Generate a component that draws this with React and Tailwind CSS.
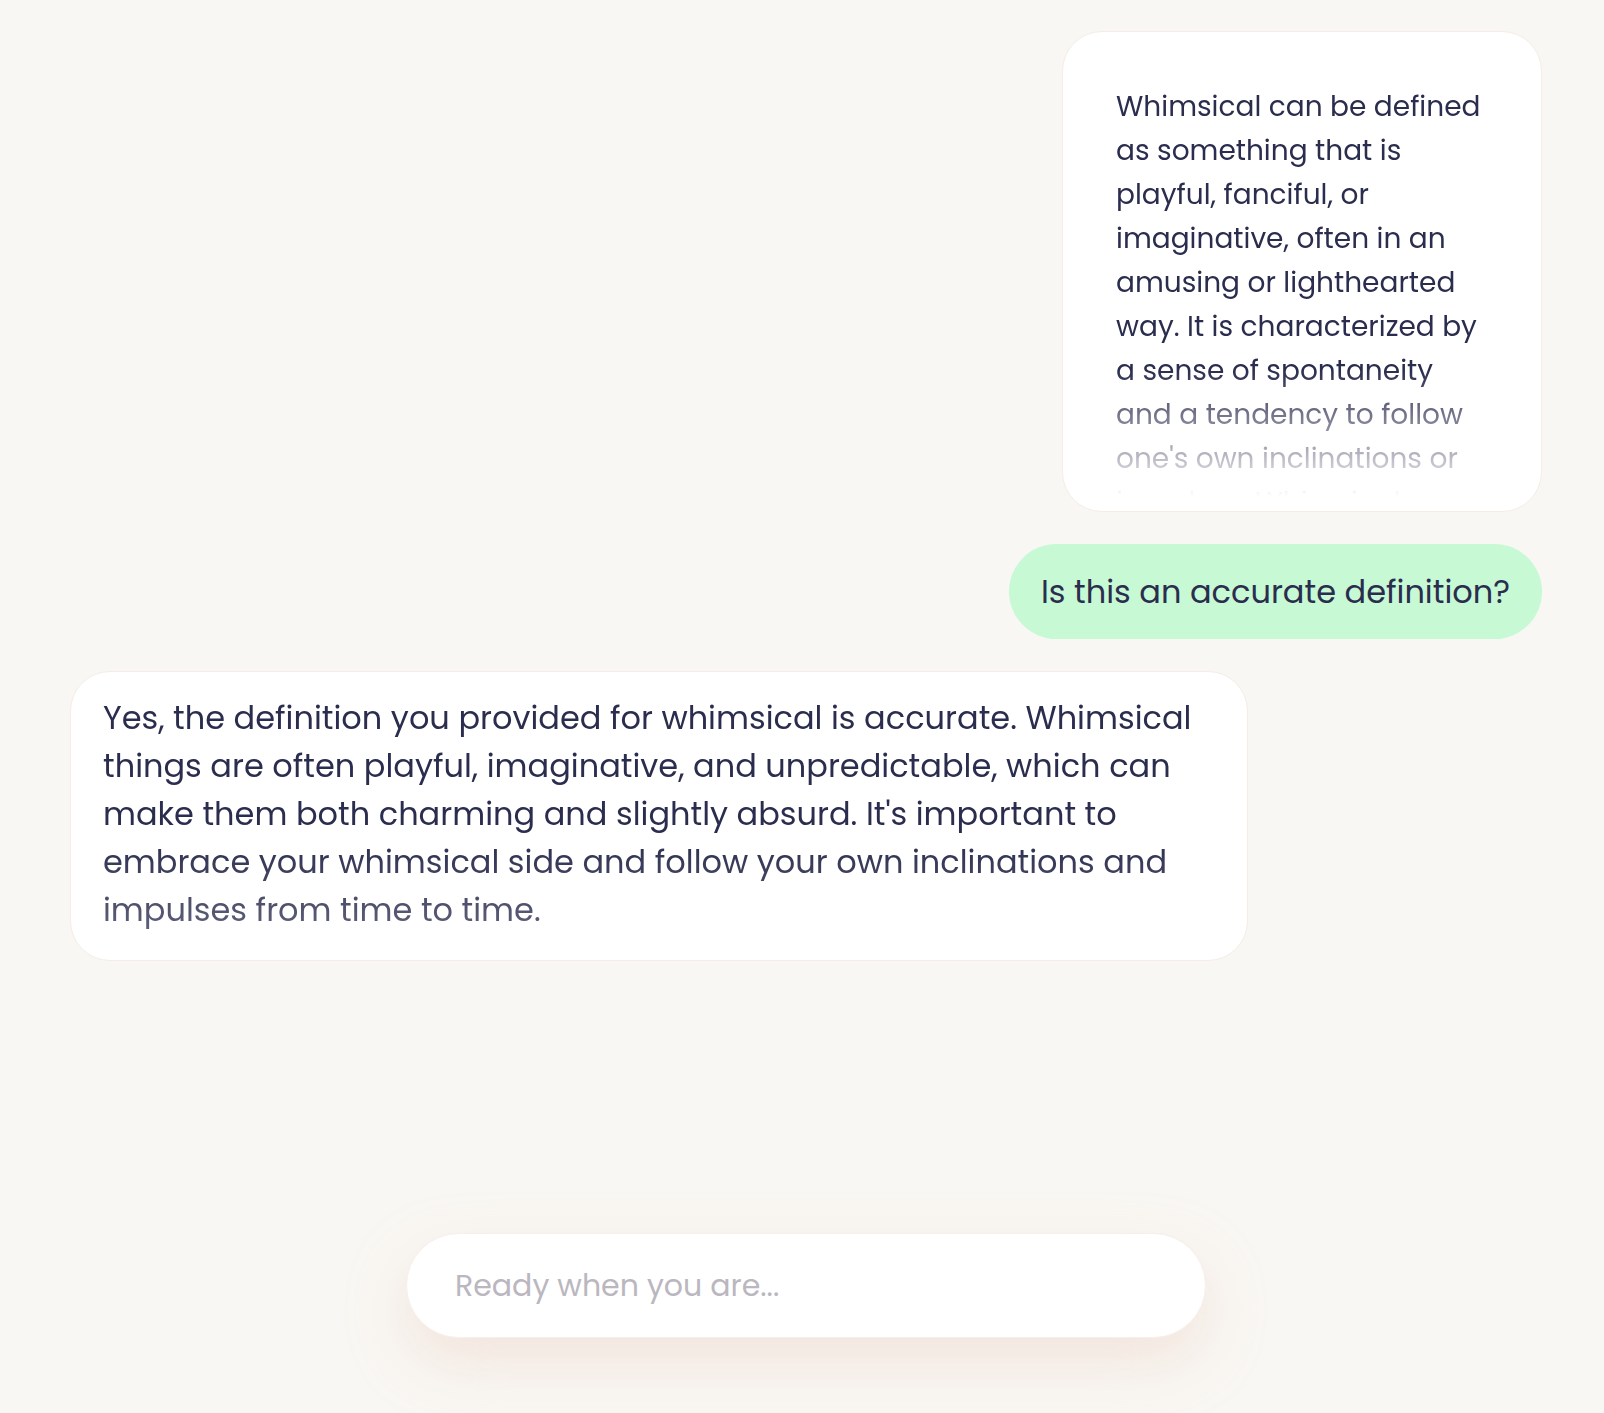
import { useState } from "react";

const fontStack = { fontFamily: "Poppins, Inter, 'Noto Sans', sans-serif" };

const definition =
  "Whimsical can be defined as something that is playful, fanciful, or imaginative, often in an amusing or lighthearted way. It is characterized by a sense of spontaneity and a tendency to follow one's own inclinations or impulses. Whimsical things are often unexpected and delightful.";

const answer =
  "Yes, the definition you provided for whimsical is accurate. Whimsical things are often playful, imaginative, and unpredictable, which can make them both charming and slightly absurd. It's important to embrace your whimsical side and follow your own inclinations and impulses from time to time.";

export default function App() {
  const [draft, setDraft] = useState("");

  return (
    <div
      className="min-h-screen bg-[#f9f7f3] flex flex-col pl-[70px] pr-[62px] pt-[31px] text-[#2b2d4e]"
      style={fontStack}
    >
      {/* ── Pasted definition (collapsed, fades out) ─────────── */}
      <div className="self-end w-[480px] h-[481px] overflow-hidden rounded-[40px] bg-white border border-[#f6ece7] px-[53px] pt-[53px]">
        <p className="text-[28px] leading-[44px] [mask-image:linear-gradient(to_bottom,black_285px,rgba(0,0,0,0.35)_370px,transparent_412px)]">
          {definition}
        </p>
      </div>

      {/* ── User message ─────────────────────────────────────── */}
      <div className="self-end mt-[32px] h-[95px] flex items-center rounded-full bg-[#c6f9d4] px-[32px]">
        <span className="text-[32px]">Is this an accurate definition?</span>
      </div>

      {/* ── Assistant reply ──────────────────────────────────── */}
      <div className="self-start mt-[32px] max-w-[80%] rounded-[40px] bg-white border border-[#f6ece7] pl-[32px] pr-[40px] pt-[22px] pb-[26px]">
        <p className="text-[32px] leading-[48px] [mask-image:linear-gradient(to_bottom,black_60%,rgba(0,0,0,0.75)_100%)]">
          {answer}
        </p>
      </div>

      {/* ── Composer ─────────────────────────────────────────── */}
      <div className="mt-auto pb-[75px] flex justify-center">
        <div className="w-[800px] h-[105px] rounded-full bg-white border border-[#f7efea] shadow-[0_24px_60px_rgba(232,196,180,0.35)] flex items-center px-[48px]">
          <input
            value={draft}
            onChange={(e) => setDraft(e.target.value)}
            placeholder="Ready when you are..."
            className="w-full bg-transparent outline-none text-[30px] text-[#2b2d4e] placeholder:text-[#bab7c0]"
            style={fontStack}
          />
        </div>
      </div>
    </div>
  );
}
